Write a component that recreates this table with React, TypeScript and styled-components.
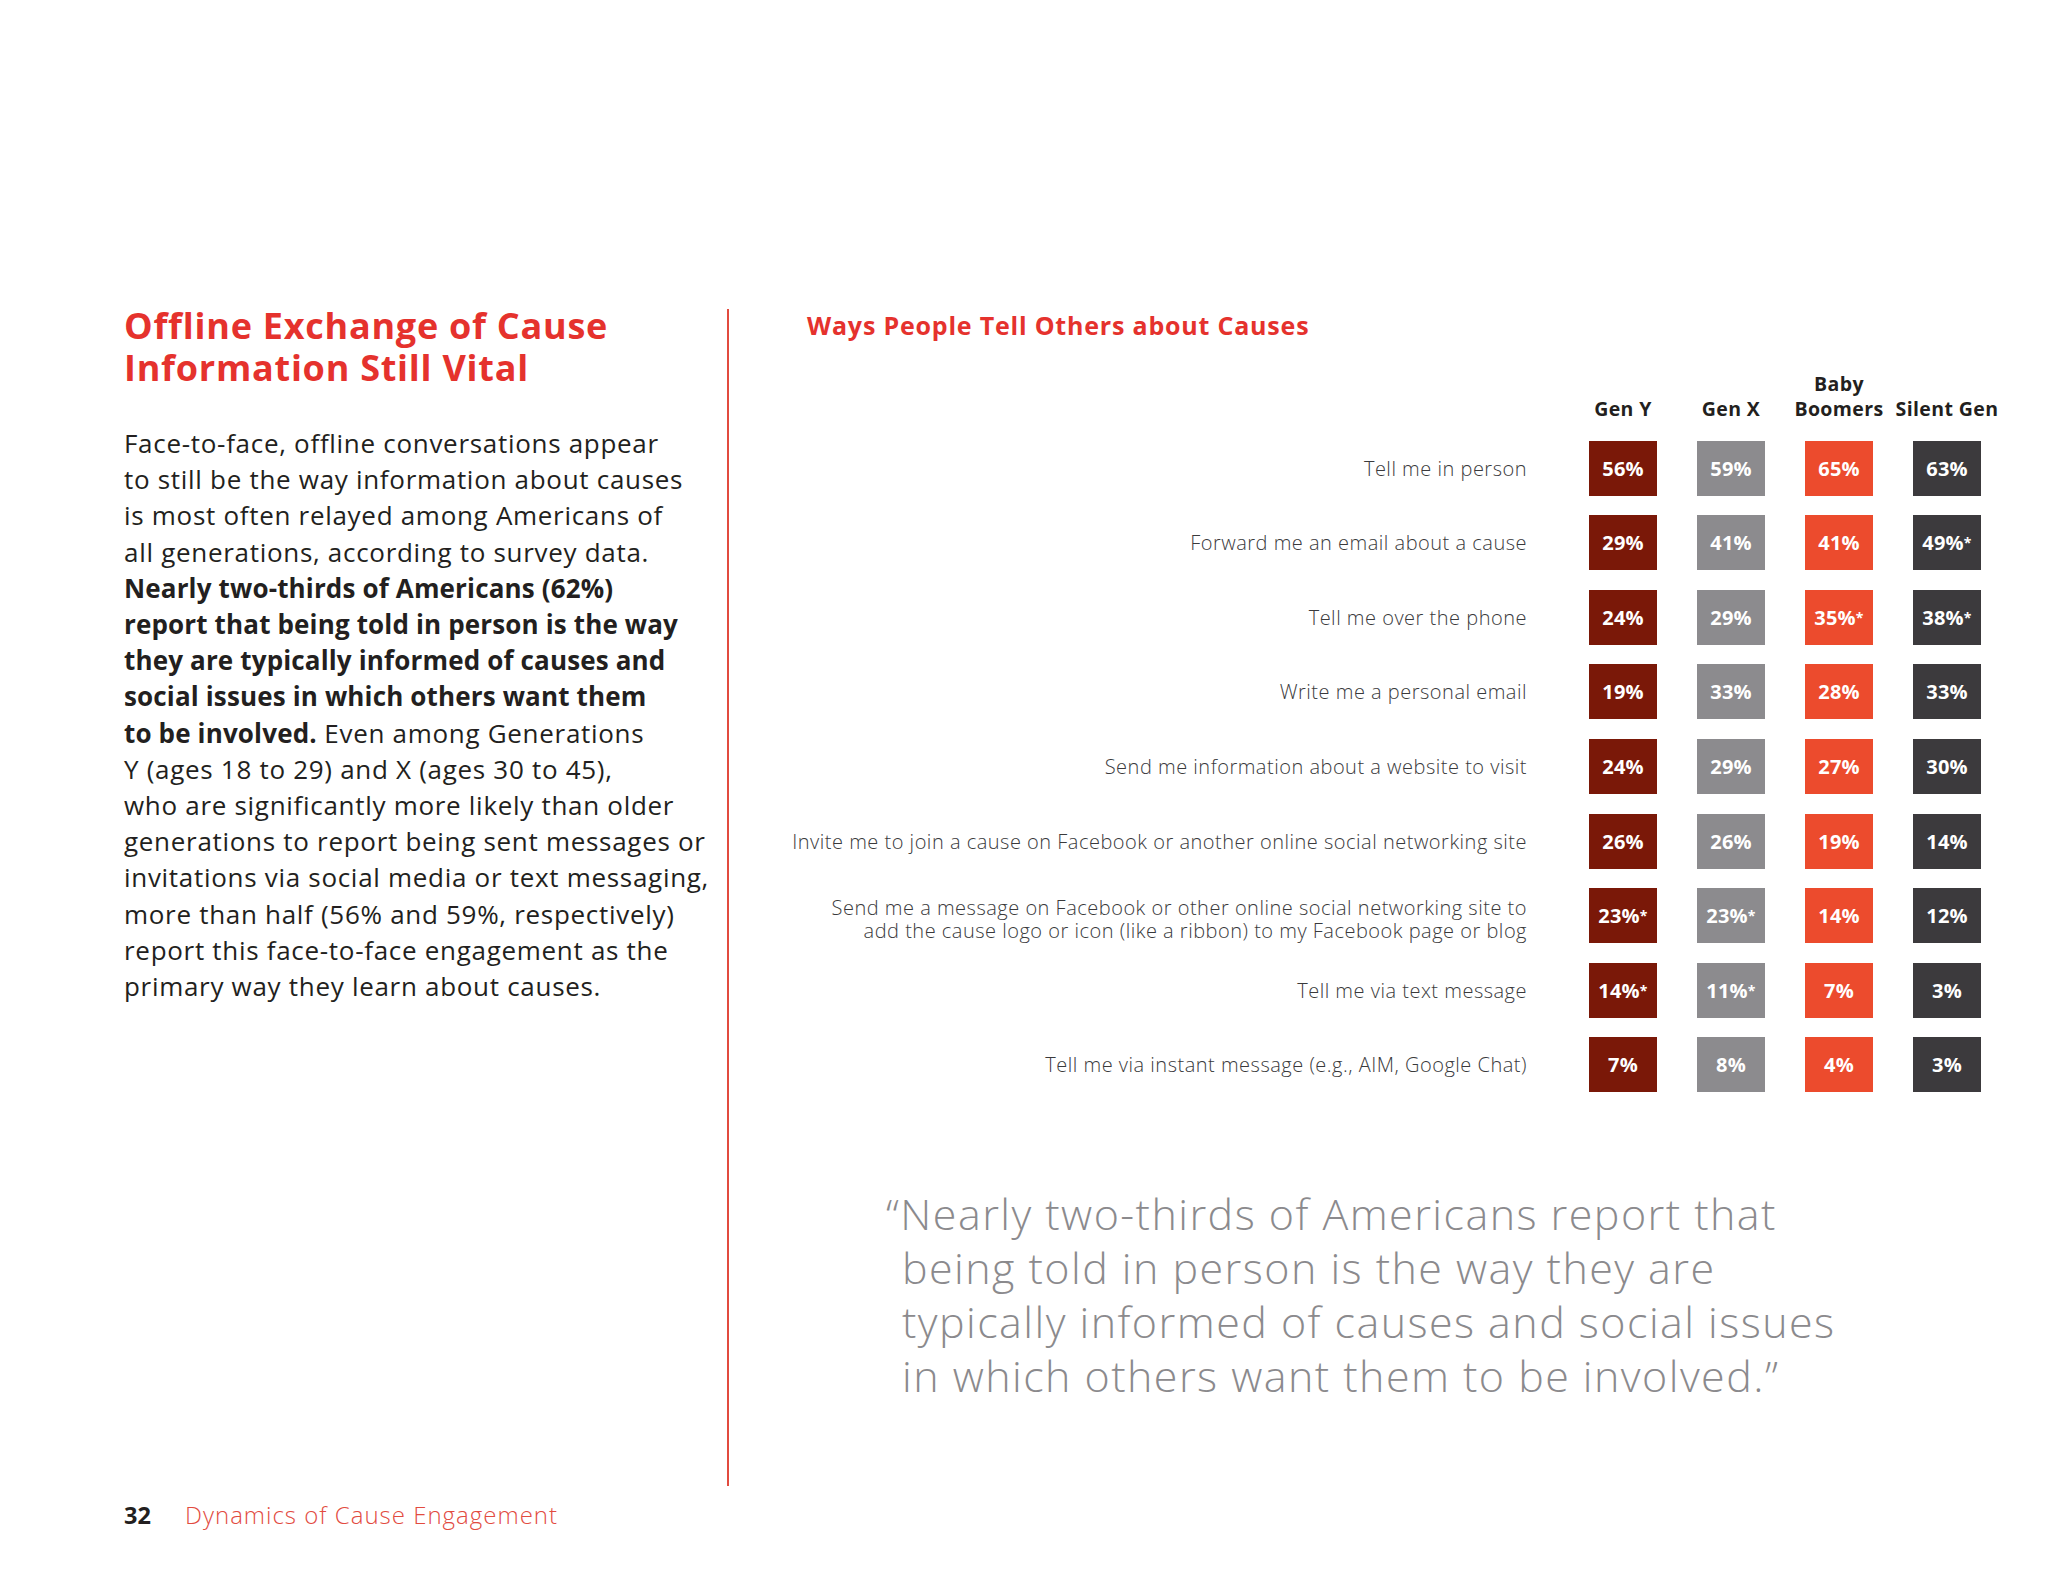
import React from "react";
import styled, { createGlobalStyle } from "styled-components";

const GlobalStyle = createGlobalStyle`
  html, body { margin: 0; padding: 0; background: #ffffff; }
  body { font-family: "Open Sans", "Liberation Sans", sans-serif; color: #231f20; }
`;

const FONT = `"Open Sans", "Liberation Sans", sans-serif`;

const Page = styled.div`
  width: 2048px;
  min-height: 1582px;
  box-sizing: border-box;
  padding: 309px 0 0 124px;
  font-family: ${FONT};
`;

const Spread = styled.div`
  display: flex;
  height: 1177px;
`;

const LeftCol = styled.section`
  width: 603px;
  flex: none;
  border-right: 2px solid #e24b3f;
`;

const Title = styled.h1`
  margin: -4px 0 0;
  font-size: 36px;
  line-height: 42px;
  font-weight: 700;
  letter-spacing: 0.75px;
  color: #e5322d;
`;

const Body = styled.p`
  margin: 36px 0 0;
  font-size: 26px;
  line-height: 36.2px;
  letter-spacing: 0.7px;
  color: #231f20;
  white-space: nowrap;
  strong { font-weight: 700; letter-spacing: 0.15px; }
`;

const RightCol = styled.section`
  flex: 1;
  padding-left: 50px;
`;

const ChartTitle = styled.h2`
  margin: 1px 0 0 28px;
  font-size: 25px;
  line-height: 30px;
  font-weight: 700;
  letter-spacing: 0.8px;
  color: #e5322d;
`;

const Grid = styled.div`
  margin-top: 31px;
  display: grid;
  grid-template-columns: 770px repeat(4, 68px);
  column-gap: 40px;
  row-gap: 19.6px;
`;

const HeaderCell = styled.div`
  justify-self: center;
  align-self: end;
  text-align: center;
  white-space: nowrap;
  font-size: 19.5px;
  line-height: 25px;
  font-weight: 700;
  letter-spacing: 0.4px;
  color: #231f20;
`;

const Label = styled.div<{ $multi?: boolean }>`
  align-self: center;
  text-align: right;
  padding-right: 22px;
  margin-top: ${(p) => (p.$multi ? "7px" : "0")};
  font-size: 20px;
  line-height: 23px;
  font-weight: 300;
  letter-spacing: 0.5px;
  color: #3a3a3c;
  white-space: nowrap;
`;

const Box = styled.div<{ $bg: string }>`
  height: 55px;
  background: ${(p) => p.$bg};
  display: flex;
  align-items: center;
  justify-content: center;
  color: #ffffff;
  font-weight: 700;
  font-size: 20px;
  letter-spacing: 0.2px;
`;

const Star = styled.span`
  font-size: 0.7em;
  vertical-align: 0.45em;
`;

const Quote = styled.blockquote`
  margin: 95px 0 0 123px;
  font-size: 43px;
  line-height: 54px;
  font-weight: 300;
  letter-spacing: 1.45px;
  color: #8b8a8d;
  white-space: nowrap;
  text-indent: -16px;
`;

const Footer = styled.footer`
  display: flex;
  align-items: baseline;
  margin-top: 14px;
  line-height: 30px;
`;

const PageNum = styled.span`
  width: 61px;
  font-size: 23.5px;
  font-weight: 700;
  color: #231f20;
`;

const Running = styled.span`
  font-size: 24px;
  font-weight: 300;
  letter-spacing: 1px;
  color: #e24b3f;
`;

const COLORS = ["#7a1808", "#8c8b8e", "#ec4b2d", "#3c3a3d"];
const HEADERS: React.ReactNode[] = ["Gen Y", "Gen X", <>Baby<br />Boomers</>, "Silent Gen"];

type Row = { label: string[]; values: string[] };
const ROWS: Row[] = [
  { label: ["Tell me in person"], values: ["56%", "59%", "65%", "63%"] },
  { label: ["Forward me an email about a cause"], values: ["29%", "41%", "41%", "49%*"] },
  { label: ["Tell me over the phone"], values: ["24%", "29%", "35%*", "38%*"] },
  { label: ["Write me a personal email"], values: ["19%", "33%", "28%", "33%"] },
  { label: ["Send me information about a website to visit"], values: ["24%", "29%", "27%", "30%"] },
  { label: ["Invite me to join a cause on Facebook or another online social networking site"], values: ["26%", "26%", "19%", "14%"] },
  {
    label: [
      "Send me a message on Facebook or other online social networking site to",
      "add the cause logo or icon (like a ribbon) to my Facebook page or blog",
    ],
    values: ["23%*", "23%*", "14%", "12%"],
  },
  { label: ["Tell me via text message"], values: ["14%*", "11%*", "7%", "3%"] },
  { label: ["Tell me via instant message (e.g., AIM, Google Chat)"], values: ["7%", "8%", "4%", "3%"] },
];

function Value({ v }: { v: string }) {
  if (v.endsWith("*")) {
    return (
      <>
        {v.slice(0, -1)}
        <Star>*</Star>
      </>
    );
  }
  return <>{v}</>;
}

export default function App() {
  return (
    <>
      <GlobalStyle />
      <Page>
        <Spread>
          <LeftCol>
            <Title>
              Offline Exchange of Cause
              <br />
              Information Still Vital
            </Title>
            <Body>
              Face-to-face, offline conversations appear
              <br />
              to still be the way information about causes
              <br />
              is most often relayed among Americans of
              <br />
              all generations, according to survey data.
              <br />
              <strong>
                Nearly two-thirds of Americans (62%)
                <br />
                report that being told in person is the way
                <br />
                they are typically informed of causes and
                <br />
                social issues in which others want them
                <br />
                to be involved.
              </strong>{" "}
              Even among Generations
              <br />
              Y (ages 18 to 29) and X (ages 30 to 45),
              <br />
              who are significantly more likely than older
              <br />
              generations to report being sent messages or
              <br />
              invitations via social media or text messaging,
              <br />
              more than half (56% and 59%, respectively)
              <br />
              report this face-to-face engagement as the
              <br />
              primary way they learn about causes.
            </Body>
          </LeftCol>
          <RightCol>
            <ChartTitle>Ways People Tell Others about Causes</ChartTitle>
            <Grid>
              <div />
              {HEADERS.map((h, i) => (
                <HeaderCell key={i}>{h}</HeaderCell>
              ))}
              {ROWS.map((r, ri) => (
                <React.Fragment key={ri}>
                  <Label $multi={r.label.length > 1}>
                    {r.label.map((l, li) => (
                      <React.Fragment key={li}>
                        {li > 0 && <br />}
                        {l}
                      </React.Fragment>
                    ))}
                  </Label>
                  {r.values.map((v, vi) => (
                    <Box key={vi} $bg={COLORS[vi]}>
                      <Value v={v} />
                    </Box>
                  ))}
                </React.Fragment>
              ))}
            </Grid>
            <Quote>
              “Nearly two-thirds of Americans report that
              <br />
              being told in person is the way they are
              <br />
              typically informed of causes and social issues
              <br />
              in which others want them to be involved.”
            </Quote>
          </RightCol>
        </Spread>
        <Footer>
          <PageNum>32</PageNum>
          <Running>Dynamics of Cause Engagement</Running>
        </Footer>
      </Page>
    </>
  );
}
